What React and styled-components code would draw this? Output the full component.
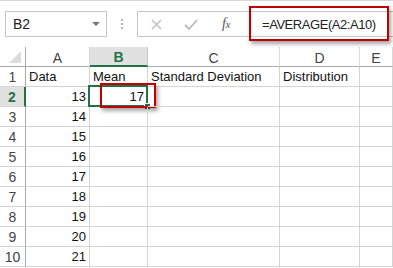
import React from "react";
import styled, { createGlobalStyle } from "styled-components";

const GlobalStyle = createGlobalStyle`
  html, body {
    margin: 0;
    padding: 0;
    background: #fff;
  }
  body {
    font-family: "Liberation Sans", Arial, sans-serif;
  }
`;

const Sheet = styled.div`
  width: 393px;
  height: 268px;
  overflow: hidden;
  background: #fff;
  border-top: 1px solid #d6d6d6;
  box-sizing: border-box;
`;

const FormulaBar = styled.div`
  height: 46px;
  display: flex;
  align-items: flex-start;
  padding: 10px 0 0 5px;
  box-sizing: border-box;
`;

const NameBox = styled.div`
  width: 102px;
  height: 26px;
  box-sizing: border-box;
  border: 1px solid #c6c6c6;
  display: flex;
  align-items: center;
  justify-content: space-between;
  padding: 0 6px 0 7px;
  font-size: 14px;
  color: #222;
`;

const DropArrow = styled.span`
  width: 0;
  height: 0;
  border-left: 4px solid transparent;
  border-right: 4px solid transparent;
  border-top: 4px solid #777;
`;

const Grip = styled.div`
  width: 30px;
  height: 26px;
  display: flex;
  flex-direction: column;
  align-items: center;
  justify-content: center;
  gap: 2px;

  span {
    width: 2px;
    height: 2px;
    background: #b4b4b4;
  }
`;

const FormulaGroup = styled.div`
  flex: 1;
  height: 26px;
  box-sizing: border-box;
  border: 1px solid #c6c6c6;
  border-right: none;
  display: flex;
  align-items: center;
`;

const ToolButton = styled.div`
  width: ${(p) => p.w}px;
  height: 24px;
  display: flex;
  align-items: center;
  justify-content: center;
  color: #bdbdbd;
`;

const Fx = styled.span`
  font-family: "Liberation Serif", "Times New Roman", serif;
  font-style: italic;
  font-size: 14px;
  color: #555;
  letter-spacing: -0.5px;

  sub {
    font-size: 11px;
    vertical-align: baseline;
  }
`;

const FormulaInput = styled.div`
  flex: 1;
  height: 24px;
  position: relative;
  display: flex;
  align-items: center;
  padding-left: 18px;
  font-size: 13px;
  letter-spacing: -0.45px;
  color: #222;
`;

const Highlight = styled.div`
  position: absolute;
  border: 2px solid #c00000;
  box-shadow: 2px 3px 4px rgba(0, 0, 0, 0.35);
  pointer-events: none;
`;

const Grid = styled.div`
  display: grid;
  grid-template-columns: 26px 64px 58px 132px 80px 1fr;
  grid-auto-rows: 20px;
  font-size: 13px;
  color: #111;
`;

const ColHead = styled.div`
  box-sizing: border-box;
  border-bottom: ${(p) => (p.active ? "2px solid #217346" : "1px solid #ababab")};
  border-right: 1px solid ${(p) => (p.active ? "#c6c6c6" : "#dadada")};
  background: ${(p) => (p.active ? "#e1e1e1" : "#fff")};
  color: ${(p) => (p.active ? "#217346" : "#444")};
  font-weight: ${(p) => (p.active ? "bold" : "normal")};
  font-size: 14px;
  display: flex;
  align-items: center;
  justify-content: center;
  padding-top: 2px;
`;

const Corner = styled.div`
  box-sizing: border-box;
  border-bottom: 1px solid #ababab;
  border-right: 1px solid #ababab;
  display: flex;
  align-items: flex-end;
  justify-content: flex-end;
  padding: 0 4px 3px 0;

  span {
    width: 0;
    height: 0;
    border-left: 12px solid transparent;
    border-bottom: 12px solid #dcdcdc;
  }
`;

const RowHead = styled.div`
  box-sizing: border-box;
  border-bottom: 1px solid #d4d4d4;
  border-right: ${(p) => (p.active ? "2px solid #217346" : "1px solid #ababab")};
  background: ${(p) => (p.active ? "#e1e1e1" : "#fff")};
  color: ${(p) => (p.active ? "#217346" : "#444")};
  font-weight: ${(p) => (p.active ? "bold" : "normal")};
  font-size: 14px;
  display: flex;
  align-items: center;
  justify-content: center;
  padding-top: 1px;
`;

const Cell = styled.div`
  position: relative;
  box-sizing: border-box;
  border-bottom: 1px solid #d4d4d4;
  border-right: 1px solid #d4d4d4;
  display: flex;
  align-items: flex-end;
  justify-content: ${(p) => (p.num ? "flex-end" : "flex-start")};
  padding: 0 3px 2px 3px;
  white-space: nowrap;
`;

const ActiveFrame = styled.div`
  position: absolute;
  left: -2px;
  top: -2px;
  right: -1px;
  bottom: -1px;
  border: 2px solid #217346;
  pointer-events: none;
`;

const FillHandle = styled.div`
  position: absolute;
  right: -4px;
  bottom: -4px;
  width: 5px;
  height: 5px;
  background: #217346;
  border: 1px solid #fff;
`;

const columns = ["A", "B", "C", "D", "E"];
const data = [13, 14, 15, 16, 17, 18, 19, 20, 21];

const App = () => {
  return (
    <>
      <GlobalStyle />
      <Sheet>
        <FormulaBar>
          <NameBox>
            <span>B2</span>
            <DropArrow />
          </NameBox>
          <Grip>
            <span />
            <span />
            <span />
          </Grip>
          <FormulaGroup>
            <ToolButton w={36}>
              <svg width="11" height="11" viewBox="0 0 11 11">
                <path d="M1 1 L10 10 M10 1 L1 10" stroke="#bcbcbc" strokeWidth="1.4" />
              </svg>
            </ToolButton>
            <ToolButton w={34}>
              <svg width="14" height="11" viewBox="0 0 14 11">
                <path d="M1 6 L5 10 L13 1" stroke="#bcbcbc" strokeWidth="1.8" fill="none" />
              </svg>
            </ToolButton>
            <ToolButton w={36}>
              <Fx>
                f<sub>x</sub>
              </Fx>
            </ToolButton>
            <FormulaInput>
              =AVERAGE(A2:A10)
              <Highlight style={{ left: 5, top: -6, width: 136, height: 31 }} />
            </FormulaInput>
          </FormulaGroup>
        </FormulaBar>

        <Grid>
          <Corner>
            <span />
          </Corner>
          {columns.map((c) => (
            <ColHead key={c} active={c === "B"}>
              {c}
            </ColHead>
          ))}

          <RowHead>1</RowHead>
          <Cell>Data</Cell>
          <Cell>Mean</Cell>
          <Cell>Standard Deviation</Cell>
          <Cell>Distribution</Cell>
          <Cell />

          {data.map((v, i) => {
            const row = i + 2;
            const active = row === 2;
            return (
              <React.Fragment key={row}>
                <RowHead active={active}>{row}</RowHead>
                <Cell num>{v}</Cell>
                <Cell num>
                  {active && "17"}
                  {active && (
                    <>
                      <ActiveFrame />
                      <FillHandle />
                      <Highlight style={{ left: 10, top: -4, right: -9, bottom: -2 }} />
                    </>
                  )}
                </Cell>
                <Cell />
                <Cell />
                <Cell />
              </React.Fragment>
            );
          })}
        </Grid>
      </Sheet>
    </>
  );
};

export default App;
